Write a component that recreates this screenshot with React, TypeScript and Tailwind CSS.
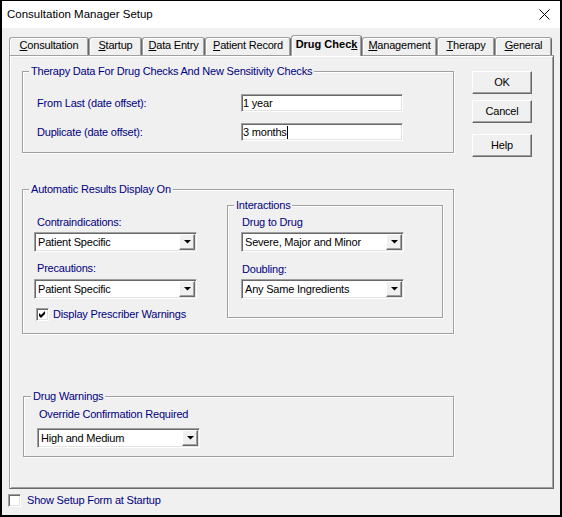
import React from "react";

const sunken =
  "border border-t-[#a0a0a0] border-l-[#a0a0a0] border-r-white border-b-white shadow-[inset_1px_1px_#696969,inset_-1px_-1px_#e3e3e3] p-px";
const raised =
  "border border-t-white border-l-white border-r-[#696969] border-b-[#696969] shadow-[inset_-1px_-1px_#a0a0a0]";
const etched =
  "border border-[#a0a0a0] shadow-[inset_1px_1px_#fff,1px_1px_#fff]";

function Tab({
  children,
  w,
  selected,
}: {
  children: React.ReactNode;
  w: string;
  selected?: boolean;
}) {
  return (
    <div
      className={
        selected
          ? `${w} h-[21px] -mb-px relative z-10 bg-[#f0f0f0] flex items-center justify-center pb-[4px] border-t border-l border-r border-t-[#a0a0a0] border-l-[#a0a0a0] border-r-[#696969] rounded-t-[3px] shadow-[inset_1px_1px_#fff,inset_-1px_0_#a0a0a0] font-bold tracking-[0px]`
          : `${w} h-[18px] flex items-center justify-center pb-[3px] border-t border-l border-r border-t-[#a0a0a0] border-l-[#a0a0a0] border-r-[#696969] rounded-t-[3px] shadow-[inset_1px_1px_#fff,inset_-1px_0_#a0a0a0]`
      }
    >
      <span className="whitespace-nowrap">{children}</span>
    </div>
  );
}

function Select({ value }: { value: string }) {
  return (
    <div className={`w-[163px] h-[20px] bg-white flex items-stretch ${sunken}`}>
      <div className="flex-1 flex items-center pl-[2px] whitespace-nowrap">{value}</div>
      <div className={`w-[16px] bg-[#f0f0f0] flex items-center justify-center ${raised}`}>
        <svg width="7" height="4" viewBox="0 0 7 4">
          <polygon points="0,0 7,0 3.5,3.6" fill="#000" />
        </svg>
      </div>
    </div>
  );
}

function Check({ checked }: { checked?: boolean }) {
  return (
    <div className={`w-[13px] h-[13px] bg-white flex items-center justify-center ${sunken}`}>
      {checked && (
        <svg width="7" height="7" viewBox="0 0 7 7">
          <polygon points="0,2 2,4 6,0 6,3 2,7 0,5" fill="#000" />
        </svg>
      )}
    </div>
  );
}

function TextBox({ value, caret }: { value: string; caret?: boolean }) {
  return (
    <div className={`w-[162px] h-[18px] bg-white flex items-center pl-px ${sunken}`}>
      <span className="whitespace-nowrap">{value}</span>
      {caret && <span className="w-px h-[13px] bg-black" />}
    </div>
  );
}

function Button({ children, mt }: { children: React.ReactNode; mt: string }) {
  return (
    <div className={`${mt} w-[60px] h-[23px] flex items-center justify-center ${raised}`}>
      {children}
    </div>
  );
}

export default function App() {
  return (
    <div className="w-[562px] h-[517px] bg-black pt-px px-[2px] pb-[2px] font-['Liberation_Sans',Arial,sans-serif] text-[11px] tracking-[-0.2px] leading-[13px] text-black select-none">
      <div className="h-full flex flex-col bg-[#f0f0f0]">
        {/* title bar */}
        <div className="h-[27px] shrink-0 bg-white flex items-center justify-between pl-[5px] pr-[10px]">
          <span className="text-[11.5px] tracking-normal">Consultation Manager Setup</span>
          <svg width="11" height="11" viewBox="0 0 11 11">
            <path d="M0.5 0.5 L10.5 10.5 M10.5 0.5 L0.5 10.5" stroke="#000" strokeWidth="1" />
          </svg>
        </div>

        <div className="flex-1 flex flex-col pt-[7px]">
          {/* tabs */}
          <div className="flex items-end h-[20px] ml-[7px]">
            <Tab w="w-[80px]">
              <span className="underline">C</span>onsultation
            </Tab>
            <Tab w="w-[53px]">
              <span className="underline">S</span>tartup
            </Tab>
            <Tab w="w-[63px]">
              <span className="underline">D</span>ata Entry
            </Tab>
            <Tab w="w-[86px]">
              <span className="underline">P</span>atient Record
            </Tab>
            <Tab w="w-[71px]" selected>
              Drug Chec<span className="underline">k</span>
            </Tab>
            <Tab w="w-[75px]">
              <span className="underline">M</span>anagement
            </Tab>
            <Tab w="w-[58px]">
              <span className="underline">T</span>herapy
            </Tab>
            <Tab w="w-[57px]">
              <span className="underline">G</span>eneral
            </Tab>
          </div>

          {/* tab page */}
          <div className="ml-[7px] w-[545px] h-[434px] flex pl-[12px] pt-[9px] border border-t-[#a0a0a0] border-l-[#a0a0a0] border-r-[#696969] border-b-[#696969] shadow-[inset_1px_1px_#fff,inset_-1px_-1px_#a0a0a0]">
            <div className="w-[432px] flex flex-col">
              {/* group 1 */}
              <fieldset className={`w-[432px] h-[88px] ${etched}`}>
                <legend className="ml-[6px] px-[2px] text-[#000080] bg-[#f0f0f0]">
                  Therapy Data For Drug Checks And New Sensitivity Checks
                </legend>
                <div className="pt-[16px] pl-[14px] flex flex-col gap-[11px]">
                  <div className="flex items-center">
                    <span className="w-[204px] text-[#000080]">From Last (date offset):</span>
                    <TextBox value="1 year" />
                  </div>
                  <div className="flex items-center">
                    <span className="w-[204px] text-[#000080]">Duplicate (date offset):</span>
                    <TextBox value="3 months" caret />
                  </div>
                </div>
              </fieldset>

              {/* group 2 */}
              <fieldset className={`mt-[30px] w-[432px] h-[151px] ${etched}`}>
                <legend className="ml-[6px] px-[2px] text-[#000080] bg-[#f0f0f0]">
                  Automatic Results Display On
                </legend>
                <div className="flex items-start pl-[11px]">
                  <div className="w-[163px] flex flex-col pt-[20px]">
                    <span className="ml-[3px] h-[13px] text-[#000080]">Contraindications:</span>
                    <div className="mt-[3px]">
                      <Select value="Patient Specific" />
                    </div>
                    <span className="mt-[10px] ml-[3px] h-[13px] text-[#000080]">Precautions:</span>
                    <div className="mt-[4px]">
                      <Select value="Patient Specific" />
                    </div>
                    <div className="mt-[9px] ml-[2px] flex items-center gap-[4px]">
                      <Check checked />
                      <span className="text-[#000080] whitespace-nowrap">Display Prescriber Warnings</span>
                    </div>
                  </div>

                  <fieldset className={`ml-[30px] mt-[3px] w-[216px] h-[119px] ${etched}`}>
                    <legend className="ml-[6px] px-[2px] text-[#000080] bg-[#f0f0f0]">Interactions</legend>
                    <div className="flex flex-col pl-[13px] pt-[4px]">
                      <span className="ml-px h-[13px] text-[#000080]">Drug to Drug</span>
                      <div className="mt-[3px]">
                        <Select value="Severe, Major and Minor" />
                      </div>
                      <span className="mt-[11px] ml-px h-[13px] text-[#000080]">Doubling:</span>
                      <div className="mt-[3px]">
                        <Select value="Any Same Ingredients" />
                      </div>
                    </div>
                  </fieldset>
                </div>
              </fieldset>

              {/* group 3 */}
              <fieldset className={`mt-[56px] ml-px w-[431px] h-[67px] ${etched}`}>
                <legend className="ml-[7px] px-[2px] text-[#000080] bg-[#f0f0f0]">Drug Warnings</legend>
                <div className="flex flex-col pl-[13px] pt-[5px]">
                  <span className="ml-[2px] h-[13px] text-[#000080]">Override Confirmation Required</span>
                  <div className="mt-[7px]">
                    <Select value="High and Medium" />
                  </div>
                </div>
              </fieldset>
            </div>

            {/* buttons */}
            <div className="ml-[18px] flex flex-col">
              <Button mt="mt-[6px]">OK</Button>
              <Button mt="mt-[6px]">Cancel</Button>
              <Button mt="mt-[11px]">Help</Button>
            </div>
          </div>

          {/* bottom checkbox */}
          <div className="mt-[5px] ml-[6px] flex items-center gap-[6px]">
            <Check />
            <span className="text-[#000080]">Show Setup Form at Startup</span>
          </div>
        </div>
      </div>
    </div>
  );
}
